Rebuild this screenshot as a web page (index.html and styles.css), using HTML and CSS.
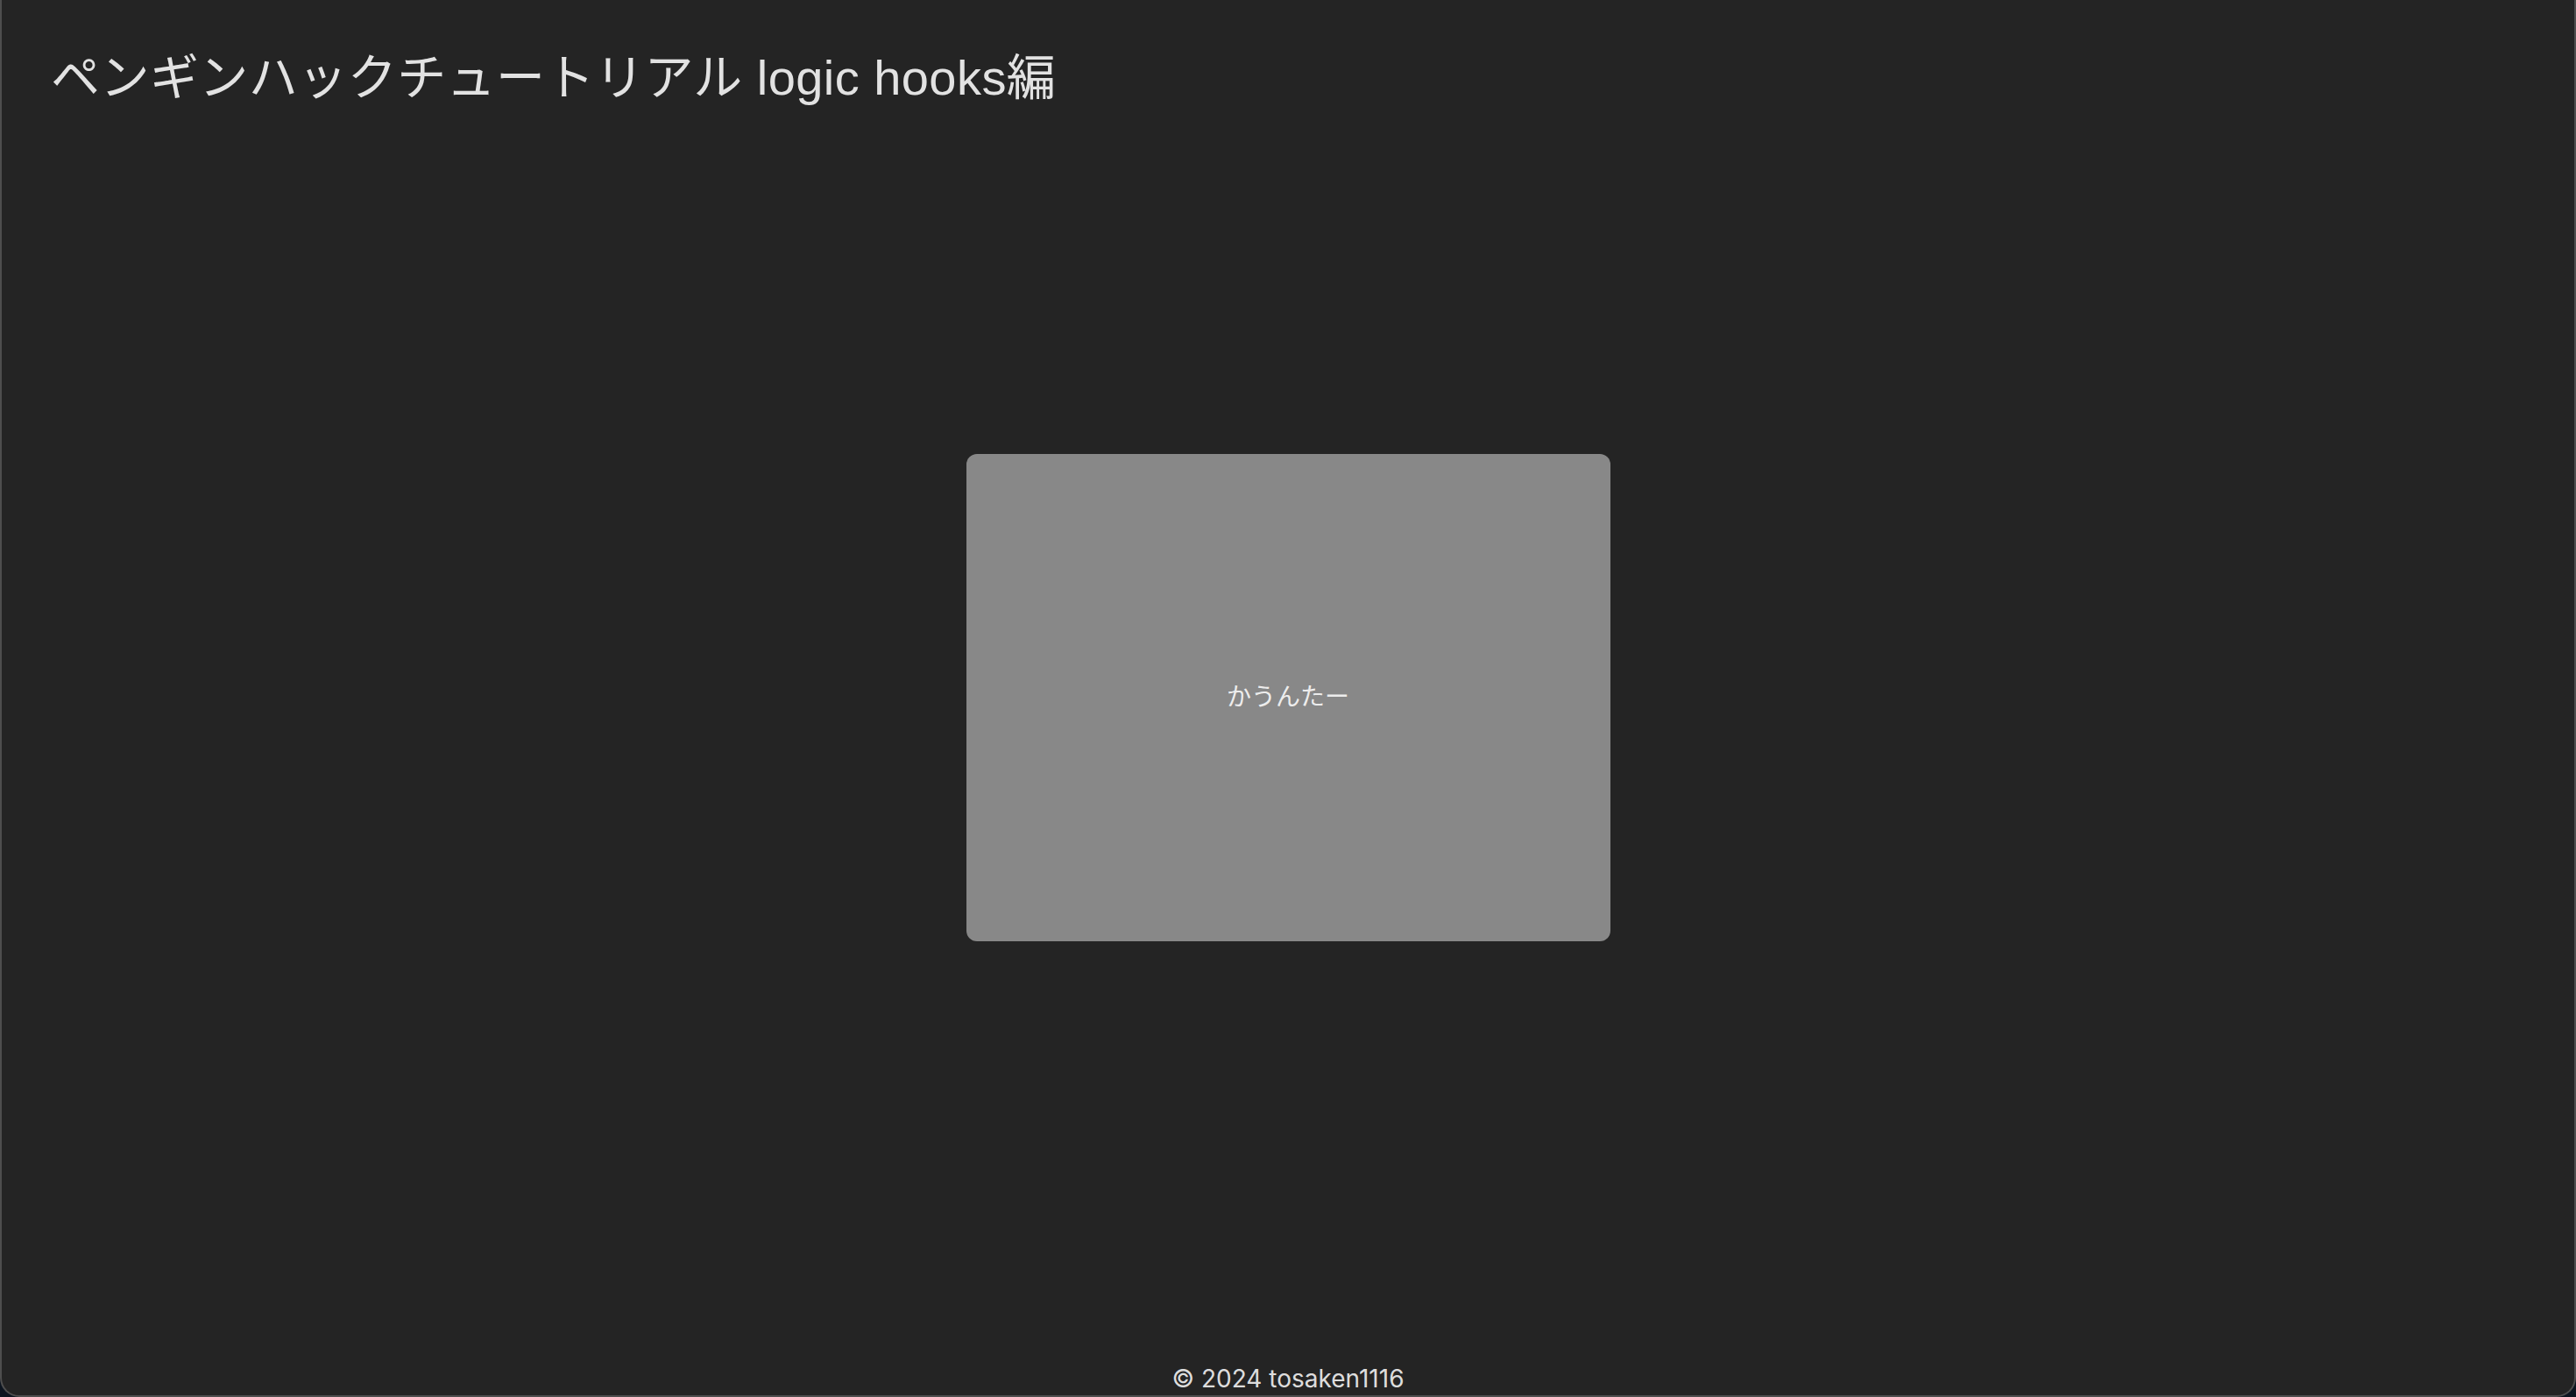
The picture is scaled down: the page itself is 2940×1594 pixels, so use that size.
FILE: index.html
```html
<!DOCTYPE html>
<html lang="ja">
<head>
<meta charset="utf-8">
<title>ペンギンハックチュートリアル logic hooks編</title>
<link rel="stylesheet" href="styles.css">
</head>
<body>
<div class="window">
  <header class="header">
    <h1 class="title">ペンギンハックチュートリアル logic hooks編</h1>
  </header>
  <main class="main">
    <div class="card">かうんたー</div>
  </main>
  <footer class="footer">© 2024 tosaken1116</footer>
</div>
</body>
</html>
```

FILE: styles.css
```css
html, body {
  margin: 0;
  padding: 0;
  width: 2940px;
  height: 1594px;
  overflow: hidden;
  background: #0d1520;
}

.window {
  box-sizing: border-box;
  width: 2940px;
  height: 1594px;
  display: flex;
  flex-direction: column;
  background: #242424;
  border: 2px solid #4e4e4e;
  border-top: none;
  border-radius: 0 0 22px 22px;
  color: rgba(255, 255, 255, 0.87);
  font-family: Inter, "Noto Sans CJK JP", sans-serif;
  line-height: 1.5;
  overflow: hidden;
}

.header {
  padding: 47px 56px 0;
}

.title {
  margin: 0;
  font-family: "Liberation Sans", "Noto Sans CJK JP", sans-serif;
  font-size: 56px;
  font-weight: 400;
  line-height: 84px;
  letter-spacing: 0.45px;
}

.main {
  flex: 1;
  display: flex;
  justify-content: center;
  align-items: flex-start;
  padding-top: 387px;
}

.card {
  box-sizing: border-box;
  width: 735px;
  height: 556px;
  padding-bottom: 6px;
  border-radius: 12px;
  background: #888888;
  display: flex;
  align-items: center;
  justify-content: center;
  font-family: "Noto Sans CJK JP", sans-serif;
  font-size: 28px;
  color: rgba(255, 255, 255, 0.87);
}

.footer {
  text-align: center;
  font-size: 28px;
  line-height: 42px;
  margin-bottom: -2px;
}
```
